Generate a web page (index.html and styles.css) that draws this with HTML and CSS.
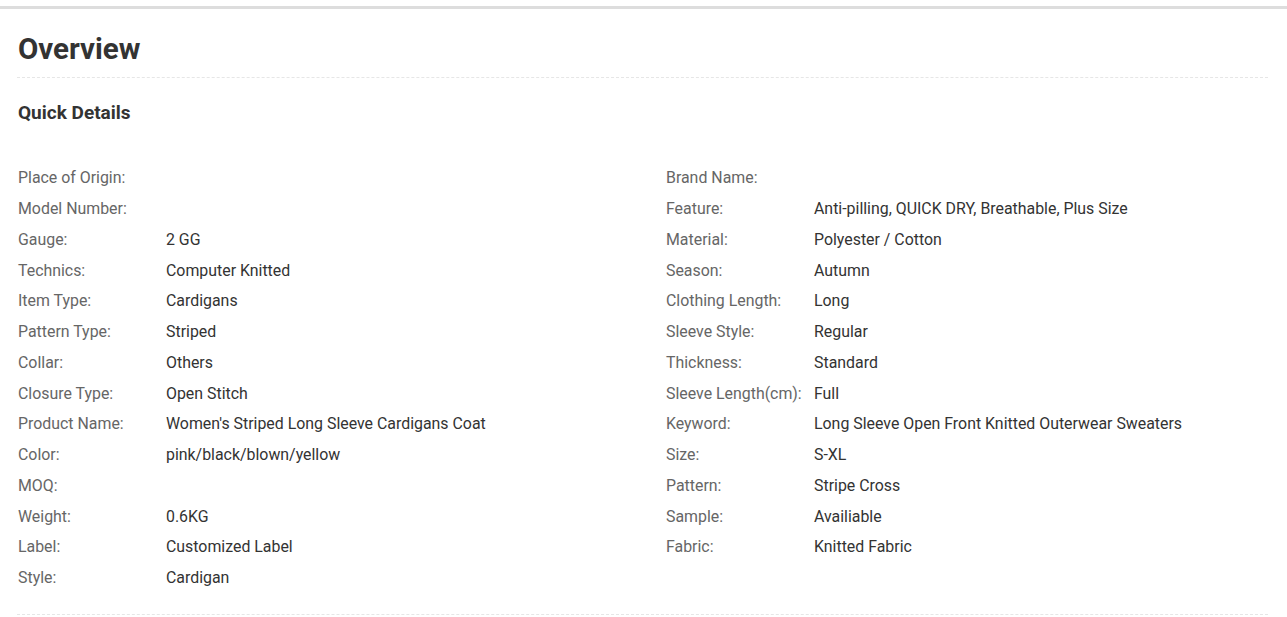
FILE: index.html
```html
<!DOCTYPE html>
<html lang="en">
<head>
<meta charset="utf-8">
<title>Overview</title>
<link rel="stylesheet" href="styles.css">
</head>
<body>
<div class="topbar"></div>
<section class="overview">
  <h1 class="title">Overview</h1>
  <h2 class="subtitle">Quick Details</h2>
  <div class="details">
    <dl class="col">
      <div class="row"><dt>Place of Origin:</dt><dd></dd></div>
      <div class="row"><dt>Model Number:</dt><dd></dd></div>
      <div class="row"><dt>Gauge:</dt><dd>2 GG</dd></div>
      <div class="row"><dt>Technics:</dt><dd>Computer Knitted</dd></div>
      <div class="row"><dt>Item Type:</dt><dd>Cardigans</dd></div>
      <div class="row"><dt>Pattern Type:</dt><dd>Striped</dd></div>
      <div class="row"><dt>Collar:</dt><dd>Others</dd></div>
      <div class="row"><dt>Closure Type:</dt><dd>Open Stitch</dd></div>
      <div class="row"><dt>Product Name:</dt><dd>Women's Striped Long Sleeve Cardigans Coat</dd></div>
      <div class="row"><dt>Color:</dt><dd>pink/black/blown/yellow</dd></div>
      <div class="row"><dt>MOQ:</dt><dd></dd></div>
      <div class="row"><dt>Weight:</dt><dd>0.6KG</dd></div>
      <div class="row"><dt>Label:</dt><dd>Customized Label</dd></div>
      <div class="row"><dt>Style:</dt><dd>Cardigan</dd></div>
    </dl>
    <dl class="col">
      <div class="row"><dt>Brand Name:</dt><dd></dd></div>
      <div class="row"><dt>Feature:</dt><dd>Anti-pilling, QUICK DRY, Breathable, Plus Size</dd></div>
      <div class="row"><dt>Material:</dt><dd>Polyester / Cotton</dd></div>
      <div class="row"><dt>Season:</dt><dd>Autumn</dd></div>
      <div class="row"><dt>Clothing Length:</dt><dd>Long</dd></div>
      <div class="row"><dt>Sleeve Style:</dt><dd>Regular</dd></div>
      <div class="row"><dt>Thickness:</dt><dd>Standard</dd></div>
      <div class="row"><dt>Sleeve Length(cm):</dt><dd>Full</dd></div>
      <div class="row"><dt>Keyword:</dt><dd>Long Sleeve Open Front Knitted Outerwear Sweaters</dd></div>
      <div class="row"><dt>Size:</dt><dd>S-XL</dd></div>
      <div class="row"><dt>Pattern:</dt><dd>Stripe Cross</dd></div>
      <div class="row"><dt>Sample:</dt><dd>Availiable</dd></div>
      <div class="row"><dt>Fabric:</dt><dd>Knitted Fabric</dd></div>
    </dl>
  </div>
</section>
</body>
</html>
```
FILE: styles.css
```css
html, body {
  margin: 0;
  padding: 0;
  background: #fff;
}
body {
  font-family: Roboto, "Liberation Sans", Arial, sans-serif;
  color: #333;
}
.topbar {
  margin-top: 6px;
  height: 3px;
  background: #dddddd;
}
.overview {
  padding: 0 19px 0 17px;
}
.title {
  margin: 20px 0 0;
  padding: 0 0 8px 1px;
  font-size: 29.5px;
  line-height: 40px;
  font-weight: 700;
  color: #333;
  border-bottom: 1px dashed #e6e6e6;
}
.subtitle {
  margin: 23px 0 0;
  padding-left: 1px;
  font-size: 19px;
  line-height: 24px;
  font-weight: 700;
  color: #333;
}
.details {
  display: grid;
  grid-template-columns: 648px 1fr;
  margin-top: 38px;
  padding: 0 0 20px 1px;
  border-bottom: 1px dashed #e6e6e6;
}
.col {
  margin: 0;
}
.row {
  display: flex;
  font-size: 15.9px;
  line-height: 20px;
  padding: 5.385px 0;
}
.row dt {
  width: 148px;
  flex: none;
  color: #666;
}
.row dd {
  margin: 0;
  color: #333;
}
```
